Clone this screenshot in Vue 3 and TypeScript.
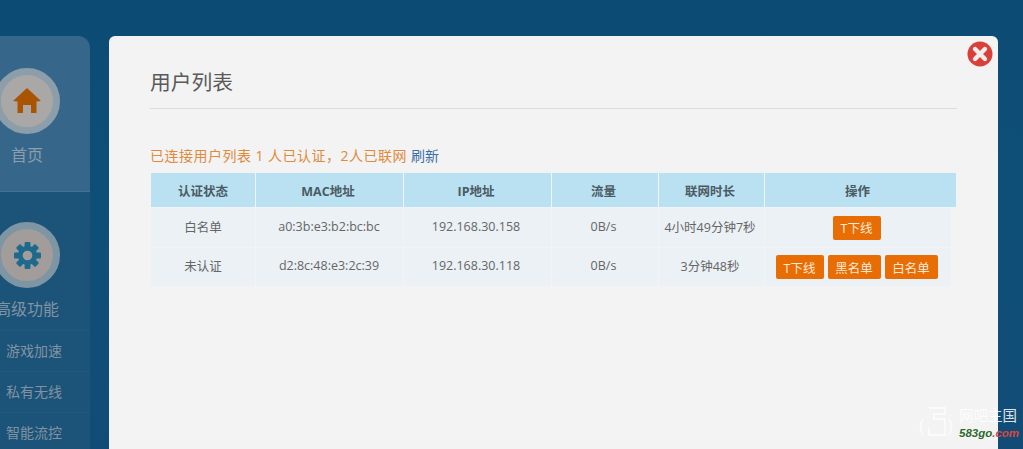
<script setup lang="ts">
interface Row { status: string; mac: string; ip: string; flow: string; time: string; actions: string[] }
const heads = ['认证状态', 'MAC地址', 'IP地址', '流量', '联网时长', '操作']
const rows: Row[] = [
  { status: '白名单', mac: 'a0:3b:e3:b2:bc:bc', ip: '192.168.30.158', flow: '0B/s', time: '4小时49分钟7秒', actions: ['T下线'] },
  { status: '未认证', mac: 'd2:8c:48:e3:2c:39', ip: '192.168.30.118', flow: '0B/s', time: '3分钟48秒', actions: ['T下线', '黑名单', '白名单'] },
]
const subs = ['游戏加速', '私有无线', '智能流控']
</script>

<template>
  <div class="page">
    <aside class="side">
      <div class="home">
        <div class="disc">
          <svg width="28" height="26" viewBox="0 0 28 26"><path d="M14 0 L28 13 L23.5 13.5 L23.5 25 L18 25 L18 17 L10 17 L10 25 L4.5 25 L4.5 13.5 L0 13 Z" fill="#a85400"/></svg>
        </div>
        <div class="big">首页</div>
      </div>
      <div class="adv">
        <div class="disc gear">
          <svg width="27" height="27" viewBox="0 0 28 28">
            <g fill="#1d6a8c">
              <rect x="11" y="0" width="6" height="28" rx="1"/>
              <rect x="11" y="0" width="6" height="28" rx="1" transform="rotate(45 14 14)"/>
              <rect x="11" y="0" width="6" height="28" rx="1" transform="rotate(90 14 14)"/>
              <rect x="11" y="0" width="6" height="28" rx="1" transform="rotate(135 14 14)"/>
              <circle cx="14" cy="14" r="10"/>
            </g>
            <circle cx="14" cy="14" r="5" fill="#a29c9a"/>
          </svg>
        </div>
        <div class="big adv-t">高级功能</div>
        <div v-for="s in subs" :key="s" class="sub"><span>{{ s }}</span></div>
      </div>
    </aside>

    <main class="modal">
      <h1 class="title">用户列表</h1>
      <p class="summary">已连接用户列表 1 人已认证，2人已联网 <a class="refresh">刷新</a></p>
      <div class="table">
        <div class="row head">
          <div v-for="h in heads" :key="h" class="cell">{{ h }}</div>
        </div>
        <div v-for="r in rows" :key="r.mac" class="row body">
          <div class="cell">{{ r.status }}</div>
          <div class="cell">{{ r.mac }}</div>
          <div class="cell">{{ r.ip }}</div>
          <div class="cell">{{ r.flow }}</div>
          <div class="cell">{{ r.time }}</div>
          <div class="cell ops">
            <button v-for="a in r.actions" :key="a" class="btn">{{ a }}</button>
          </div>
        </div>
      </div>
    </main>

    <svg class="close" width="26" height="26" viewBox="0 0 26 26">
      <circle cx="13" cy="13" r="12.5" fill="#d9403a"/>
      <path d="M8 8 L18 18 M18 8 L8 18" stroke="#f4efee" stroke-width="4.4" stroke-linecap="round"/>
    </svg>

    <div class="mark">
      <svg width="36" height="32" viewBox="0 0 36 32" fill="none" stroke="#ffffff" stroke-width="1.8" class="mark-logo">
        <path d="M11 2 H27 V8 H16 V13 H27 V29 H11 V22"/>
        <path d="M5 13 A14 14 0 0 0 5 29"/>
        <path d="M31 13 A14 14 0 0 1 31 29"/>
      </svg>
      <div class="mark-text">
        <div class="mark-cn">网吧主国</div>
        <div class="mark-en">583go<span>.com</span></div>
      </div>
    </div>
  </div>
</template>

<style>
html, body { margin: 0; padding: 0; }
</style>

<style scoped>
.page {
  position: relative;
  display: flex;
  align-items: flex-start;
  width: 1023px;
  height: 449px;
  overflow: hidden;
  padding-top: 36px;
  box-sizing: border-box;
  background: linear-gradient(180deg, #0c4c74 0%, #0e4f78 50%, #124c76 100%);
  font-family: "Open Sans", "Noto Sans CJK SC", sans-serif;
}
.side {
  flex: none;
  width: 126px;
  margin-left: -36px;
  color: #8a9eac;
  text-align: center;
}
.home {
  height: 156px;
  box-sizing: border-box;
  padding-top: 32px;
  background: #36678a;
  border-radius: 0 12px 0 0;
  border-bottom: 1px solid #44718f;
}
.adv {
  height: 300px;
  padding-top: 30px;
  box-sizing: border-box;
  background: #1b5379;
}
.disc {
  width: 52px;
  height: 52px;
  margin: 0 auto;
  border: 7px solid #8c9ea9;
  border-radius: 50%;
  background: #aaa8a6;
  display: flex;
  align-items: center;
  justify-content: center;
}
.gear { background: #a29c9a; border-color: #7e95a3; }
.big {
  margin-top: 9px;
  font-size: 16px;
  line-height: 24px;
}
.adv-t {
  margin-top: 9px;
  padding-bottom: 9px;
  line-height: 24px;
  color: #8193a1;
}
.sub {
  height: 40px;
  line-height: 40px;
  font-size: 14px;
  border-top: 1px solid #205879;
  color: #8193a1;
  padding-left: 14px;
}
.modal {
  flex: none;
  width: 889px;
  height: 440px;
  margin-left: 19px;
  box-sizing: border-box;
  padding: 29px 41px 0;
  background: #f3f3f4;
  border-radius: 6px 6px 0 0;
}
.title {
  margin: 0;
  padding-bottom: 8px;
  font-size: 20.75px;
  font-weight: 400;
  line-height: 35px;
  color: #5a5a5a;
  border-bottom: 1px solid #dcdcdc;
}
.summary {
  margin: 36px 0 0;
  height: 28px;
  font-size: 14px;
  line-height: 22px;
  letter-spacing: 0.48px;
  color: #e08a3c;
}
.refresh { color: #3a6ea8; letter-spacing: 0; }
.table { margin-left: 1px; width: 805px; }
.row { display: grid; grid-template-columns: 104px 148px 148px 107px 106px 192px; }
.head { height: 34px; background: #b9e1f1; font-weight: 700; color: #4b5a63; }
.body {
  width: 800px;
  grid-template-columns: 104px 148px 148px 107px 106px 187px;
  background: #ebf1f5;
  color: #666;
  border-top: 1px solid #f1f4f6;
  height: 39px;
}
.body + .body { height: 38px; }
.cell {
  display: flex;
  align-items: center;
  justify-content: center;
  font-size: 12.5px;
  border-left: 1px solid #f1f5f7;
  white-space: nowrap;
}
.cell:first-child { border-left: 0; }
.cell:nth-child(2) { padding-right: 1px; }
.cell:nth-child(3), .cell:nth-child(5) { padding-right: 3px; }
.cell:nth-child(4) { padding-right: 3px; }
.head .cell:nth-child(2) { padding-right: 3px; }
.head .cell:nth-child(6) { padding-right: 6px; }
.body .cell:not(.ops) { padding-bottom: 3px; }
.body .ops { padding-right: 3px; }
.ops { gap: 4px; }
.btn {
  height: 24px;
  width: 48px;
  padding: 0;
  border: 0;
  border-radius: 2px;
  background: #e96d05;
  color: #f8ead9;
  font: inherit;
  font-size: 12.5px;
}
.btn:not(:first-child) { width: 53px; }
.close { position: absolute; left: 967px; top: 41px; }
.mark {
  position: absolute;
  left: 918px;
  top: 406px;
  display: flex;
  gap: 5px;
}
.mark-logo { opacity: 0.7; }
.mark-cn { font-size: 14.5px; line-height: 20px; color: #fff; opacity: 0.85; }
.mark-en {
  font-size: 11.5px;
  line-height: 14px;
  font-weight: 700;
  font-style: italic;
  color: #2c6a2c;
  font-family: "Liberation Sans", sans-serif;
}
.mark-en span { color: #d9473f; }
</style>
